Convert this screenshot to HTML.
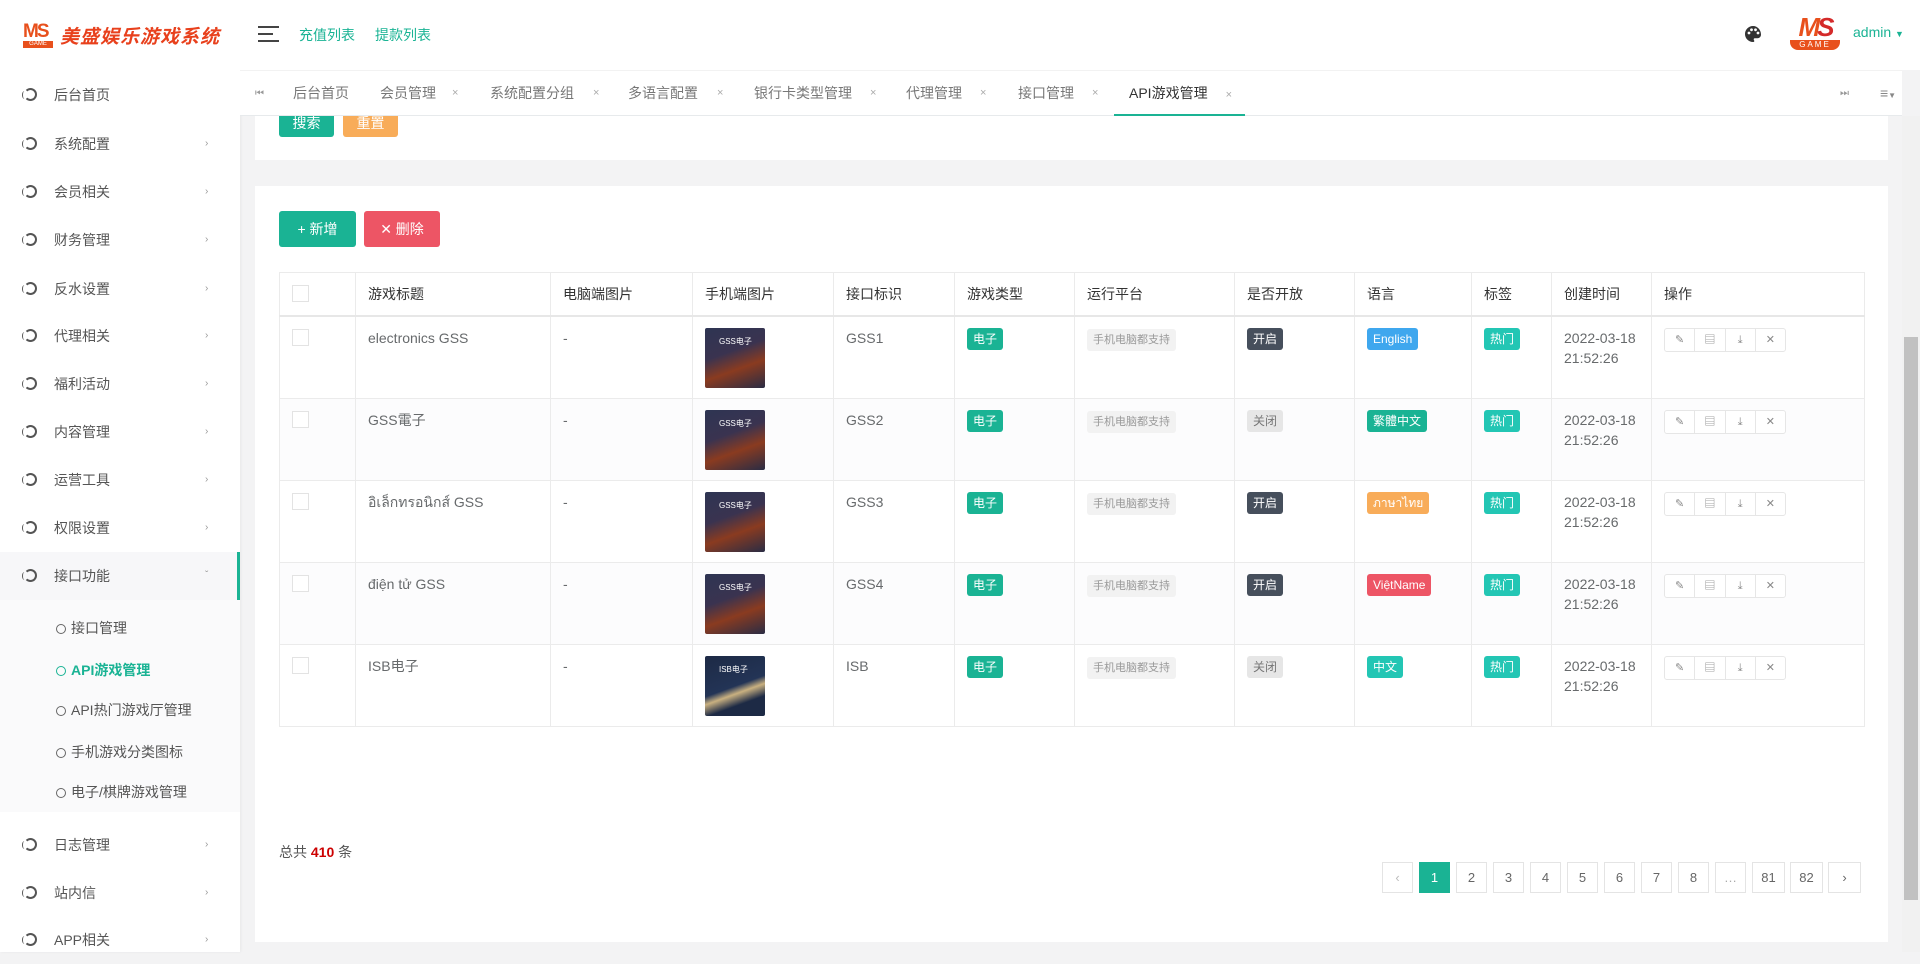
<!DOCTYPE html>
<html><head><meta charset="utf-8">
<style>
*{box-sizing:border-box;margin:0;padding:0}
body{width:1920px;height:952px;overflow:hidden;background:#f3f3f4;font-family:"Liberation Sans","Noto Sans CJK SC",sans-serif;font-size:14px;color:#676a6c;position:relative}
.abs{position:absolute}
#side{left:0;top:0;width:240px;height:952px;background:#fff;box-shadow:1px 0 3px rgba(0,0,0,.05);z-index:5}
#head{left:240px;top:0;width:1680px;height:70px;background:#fff;z-index:5}
#tabs{left:240px;top:70px;width:1662px;height:46px;background:#fff;border-bottom:1px solid #e7eaec;border-top:1px solid #f2f2f2;z-index:5}
.menu{position:absolute;left:0;width:240px;height:48px;line-height:48px;font-size:14px;color:#555}
.menu .ic{position:absolute;left:24px;top:17px;width:13px;height:13px;border:2px solid #555;border-radius:50%;border-left-color:transparent}
.menu .ic:before{content:"";position:absolute;left:-4px;top:1px;width:4px;height:8px;border-left:1.5px solid #555;border-radius:50%}
.menu span.t{position:absolute;left:54px}
.menu .ch{position:absolute;left:205px;font-size:10px;color:#999}
.sub{position:absolute;left:0;width:240px;height:41px;line-height:41px;font-size:14px;color:#555}
.sub .ic{position:absolute;left:56px;top:16px;width:10px;height:10px;border:1.5px solid #666;border-radius:50%}
.sub span.t{position:absolute;left:71px}
.tab{position:absolute;top:0;height:45px;line-height:45px;font-size:14px;color:#777}
.x{position:absolute;top:0;line-height:45px;font-size:11px;color:#aaa}
.card{position:absolute;background:#fff}
.btn{position:absolute;color:#fff;font-size:14px;text-align:center;border-radius:3px}
table{position:absolute;left:279px;top:272px;border-collapse:collapse;table-layout:fixed;width:1585px}
td,th{border:1px solid #ebebeb;vertical-align:top;text-align:left;padding:0 12px;font-weight:normal;color:#676a6c}
th{height:43px;line-height:42px;font-size:14px;color:#333;border-bottom:2px solid #e7e7e7}
td{height:82px;padding-top:11px;line-height:20px;font-size:14px}
tr:nth-child(odd) td{background:#fcfcfd}
.cb{display:inline-block;width:17px;height:17px;border:1px solid #e3e3e3;background:#fff;margin-top:1px}
.b{display:inline-block;padding:0 6px;height:22px;line-height:22px;font-size:12px;color:#fff;border-radius:3px}
.g{background:#1ab394}.dk{background:#464f5c}.gr{background:#e6e6e6;color:#777}.pl{background:#f2f2f2;color:#999;font-size:11px}
.bl{background:#3fa7ee}.or{background:#f8ac59}.rd{background:#ed5565}.tl{background:#23c6b4}
.img{width:60px;height:60px;border-radius:2px;background:linear-gradient(160deg,#2e3553 0%,#3a3350 40%,#8a3b20 65%,#2a2c44 100%);position:relative;overflow:hidden}
.img:after{content:"GSS电子";position:absolute;top:4px;left:14px;color:#fff;font-size:8px}
.img.isb{background:linear-gradient(160deg,#1d2a45 0%,#233456 50%,#c9b080 60%,#1d2a45 75%)}
.img.isb:after{content:"ISB电子"}
.ops{display:flex;width:122px;height:24px;border:1px solid #e6e6e6;border-radius:3px;background:#fff}
.ops span{flex:1;border-right:1px solid #e6e6e6;text-align:center;line-height:22px;font-size:11px;color:#888}
.ops span:last-child{border:none}
.pg{position:absolute;top:862px;height:31px;width:31px;border:1px solid #e4e4e4;background:#fff;text-align:center;line-height:29px;font-size:13px;color:#666}
</style></head><body>

<div id="side" class="abs">
  <div class="abs" style="left:23px;top:22px;width:34px;height:26px">
    <div style="color:#e8501c;font:bold 19px/19px 'Liberation Sans',sans-serif;letter-spacing:-2px">MS</div>
    <div style="background:#e8501c;color:#fff;font-size:6px;line-height:7px;text-align:center;width:30px">GAME</div>
  </div>
  <div class="abs" style="left:60px;top:22px;font-size:19px;font-weight:bold;font-style:italic;color:#e8401c;letter-spacing:1px">美盛娱乐游戏系统</div>

  <div class="menu" style="top:71px"><i class="ic"></i><span class="t">后台首页</span></div>
  <div class="menu" style="top:120px"><i class="ic"></i><span class="t">系统配置</span><span class="ch">›</span></div>
  <div class="menu" style="top:168px"><i class="ic"></i><span class="t">会员相关</span><span class="ch">›</span></div>
  <div class="menu" style="top:216px"><i class="ic"></i><span class="t">财务管理</span><span class="ch">›</span></div>
  <div class="menu" style="top:265px"><i class="ic"></i><span class="t">反水设置</span><span class="ch">›</span></div>
  <div class="menu" style="top:312px"><i class="ic"></i><span class="t">代理相关</span><span class="ch">›</span></div>
  <div class="menu" style="top:360px"><i class="ic"></i><span class="t">福利活动</span><span class="ch">›</span></div>
  <div class="menu" style="top:408px"><i class="ic"></i><span class="t">内容管理</span><span class="ch">›</span></div>
  <div class="menu" style="top:456px"><i class="ic"></i><span class="t">运营工具</span><span class="ch">›</span></div>
  <div class="menu" style="top:504px"><i class="ic"></i><span class="t">权限设置</span><span class="ch">›</span></div>
  <div class="abs" style="left:0;top:552px;width:240px;height:260px;background:#fafafb"></div>
  <div class="menu" style="top:552px;border-right:3px solid #1ab394;background:#f7f7f9"><i class="ic"></i><span class="t">接口功能</span><span class="ch">ˇ</span></div>
  <div class="sub" style="top:608px"><i class="ic"></i><span class="t">接口管理</span></div>
  <div class="sub" style="top:650px;color:#1ab394;font-weight:bold"><i class="ic" style="border-color:#1ab394"></i><span class="t">API游戏管理</span></div>
  <div class="sub" style="top:690px"><i class="ic"></i><span class="t">API热门游戏厅管理</span></div>
  <div class="sub" style="top:732px"><i class="ic"></i><span class="t">手机游戏分类图标</span></div>
  <div class="sub" style="top:772px"><i class="ic"></i><span class="t">电子/棋牌游戏管理</span></div>
  <div class="menu" style="top:821px"><i class="ic"></i><span class="t">日志管理</span><span class="ch">›</span></div>
  <div class="menu" style="top:869px"><i class="ic"></i><span class="t">站内信</span><span class="ch">›</span></div>
  <div class="menu" style="top:916px"><i class="ic"></i><span class="t">APP相关</span><span class="ch">›</span></div>
</div>

<div id="head" class="abs">
  <div class="abs" style="left:18px;top:26px;width:21px;height:16px;border-top:2px solid #444;border-bottom:2px solid #444"><div style="margin-top:5px;width:15px;border-top:2px solid #444"></div></div>
  <div class="abs" style="left:59px;top:25px;color:#1ab394;font-size:14px">充值列表</div>
  <div class="abs" style="left:135px;top:25px;color:#1ab394;font-size:14px">提款列表</div>
  <svg class="abs" style="left:1503px;top:24px" width="20" height="20" viewBox="0 0 20 20"><path d="M10 2a8 8 0 0 0 0 16c1.3 0 1.6-1 1-1.8-.6-.9-.2-2 1-2h2.5A3.5 3.5 0 0 0 18 10.5C18 5.8 14.4 2 10 2z" fill="#333"/><circle cx="6" cy="9" r="1.4" fill="#fff"/><circle cx="8.5" cy="5.8" r="1.4" fill="#fff"/><circle cx="12.5" cy="5.8" r="1.4" fill="#fff"/><circle cx="15" cy="9" r="1.4" fill="#fff"/></svg>
  <div class="abs" style="left:1550px;top:14px;width:50px;height:40px">
    <div style="color:#e8501c;font:bold italic 26px/26px 'Liberation Sans',sans-serif;letter-spacing:-3px;text-align:center"><span>M</span><span style="color:#d42a2a">S</span></div>
    <div style="background:#e8501c;color:#fff;font-size:8px;line-height:10px;text-align:center;letter-spacing:2px;border-radius:0 0 8px 8px">GAME</div>
  </div>
  <div class="abs" style="left:1613px;top:24px;color:#1ab394;font-size:14px">admin <span style="font-size:9px;color:#1ab394">▼</span></div>
</div>

<div id="tabs" class="abs">
  <div class="tab" style="left:15px;font-size:10px;color:#999">⏮</div>
  <div class="tab" style="left:53px">后台首页</div>
  <div class="tab" style="left:140px">会员管理</div><div class="x" style="left:212px">×</div>
  <div class="tab" style="left:250px">系统配置分组</div><div class="x" style="left:353px">×</div>
  <div class="tab" style="left:388px">多语言配置</div><div class="x" style="left:477px">×</div>
  <div class="tab" style="left:514px">银行卡类型管理</div><div class="x" style="left:630px">×</div>
  <div class="tab" style="left:666px">代理管理</div><div class="x" style="left:740px">×</div>
  <div class="tab" style="left:778px">接口管理</div><div class="x" style="left:852px">×</div>
  <div class="tab" style="left:874px;width:131px;border-bottom:2px solid #1ab394;color:#333;padding-left:15px">API游戏管理<span style="font-size:11px;color:#aaa;margin-left:18px">×</span></div>
  <div class="tab" style="left:1600px;font-size:10px;color:#999">⏭</div>
  <div class="tab" style="left:1640px;color:#888">≡<span style="font-size:8px">▼</span></div>
</div>

<div class="abs" style="left:1902px;top:116px;width:18px;height:836px;background:#f1f1f1"><div style="margin:221px 2px 0;height:563px;background:#c1c1c1"></div></div>

<div class="card" style="left:255px;top:116px;width:1633px;height:44px;z-index:1">
  <div class="btn" style="left:24px;top:-6px;width:55px;height:27px;line-height:27px;background:#1ab394;overflow:hidden">搜索</div>
  <div class="btn" style="left:88px;top:-6px;width:55px;height:27px;line-height:27px;background:#f8ac59">重置</div>
</div>
<div class="card" style="left:255px;top:186px;width:1633px;height:756px"></div>
<div class="btn" style="left:279px;top:211px;width:77px;height:36px;line-height:36px;background:#1ab394">+ 新增</div>
<div class="btn" style="left:364px;top:211px;width:76px;height:36px;line-height:36px;background:#ed5565">✕ 删除</div>

<table>
<colgroup><col style="width:76px"><col style="width:195px"><col style="width:142px"><col style="width:141px"><col style="width:121px"><col style="width:120px"><col style="width:160px"><col style="width:120px"><col style="width:117px"><col style="width:80px"><col style="width:100px"><col style="width:213px"></colgroup>
<tr><th><span class="cb" style="margin-top:12px;vertical-align:top"></span></th><th>游戏标题</th><th>电脑端图片</th><th>手机端图片</th><th>接口标识</th><th>游戏类型</th><th>运行平台</th><th>是否开放</th><th>语言</th><th>标签</th><th>创建时间</th><th>操作</th></tr>
<tr><td><span class="cb"></span></td><td>electronics GSS</td><td>-</td><td><div class="img"></div></td><td>GSS1</td><td><span class="b g">电子</span></td><td><span class="b pl">手机电脑都支持</span></td><td><span class="b dk">开启</span></td><td><span class="b bl">English</span></td><td><span class="b tl">热门</span></td><td>2022-03-18<br>21:52:26</td><td><div class="ops"><span>✎</span><span>▤</span><span>⤓</span><span>✕</span></div></td></tr>
<tr><td><span class="cb"></span></td><td>GSS電子</td><td>-</td><td><div class="img"></div></td><td>GSS2</td><td><span class="b g">电子</span></td><td><span class="b pl">手机电脑都支持</span></td><td><span class="b gr">关闭</span></td><td><span class="b g">繁體中文</span></td><td><span class="b tl">热门</span></td><td>2022-03-18<br>21:52:26</td><td><div class="ops"><span>✎</span><span>▤</span><span>⤓</span><span>✕</span></div></td></tr>
<tr><td><span class="cb"></span></td><td>อิเล็กทรอนิกส์ GSS</td><td>-</td><td><div class="img"></div></td><td>GSS3</td><td><span class="b g">电子</span></td><td><span class="b pl">手机电脑都支持</span></td><td><span class="b dk">开启</span></td><td><span class="b or">ภาษาไทย</span></td><td><span class="b tl">热门</span></td><td>2022-03-18<br>21:52:26</td><td><div class="ops"><span>✎</span><span>▤</span><span>⤓</span><span>✕</span></div></td></tr>
<tr><td><span class="cb"></span></td><td>điện tử GSS</td><td>-</td><td><div class="img"></div></td><td>GSS4</td><td><span class="b g">电子</span></td><td><span class="b pl">手机电脑都支持</span></td><td><span class="b dk">开启</span></td><td><span class="b rd">ViệtName</span></td><td><span class="b tl">热门</span></td><td>2022-03-18<br>21:52:26</td><td><div class="ops"><span>✎</span><span>▤</span><span>⤓</span><span>✕</span></div></td></tr>
<tr><td><span class="cb"></span></td><td>ISB电子</td><td>-</td><td><div class="img isb"></div></td><td>ISB</td><td><span class="b g">电子</span></td><td><span class="b pl">手机电脑都支持</span></td><td><span class="b gr">关闭</span></td><td><span class="b tl">中文</span></td><td><span class="b tl">热门</span></td><td>2022-03-18<br>21:52:26</td><td><div class="ops"><span>✎</span><span>▤</span><span>⤓</span><span>✕</span></div></td></tr>
</table>

<div class="abs" style="left:279px;top:842px;font-size:14px;color:#555">总共 <b style="color:#c00">410</b> 条</div>

<div class="pg" style="left:1382px;color:#bbb">‹</div>
<div class="pg" style="left:1419px;background:#1ab394;border-color:#1ab394;color:#fff">1</div>
<div class="pg" style="left:1456px">2</div>
<div class="pg" style="left:1493px">3</div>
<div class="pg" style="left:1530px">4</div>
<div class="pg" style="left:1567px">5</div>
<div class="pg" style="left:1604px">6</div>
<div class="pg" style="left:1641px">7</div>
<div class="pg" style="left:1678px">8</div>
<div class="pg" style="left:1715px;color:#aaa">…</div>
<div class="pg" style="left:1752px;width:33px">81</div>
<div class="pg" style="left:1790px;width:33px">82</div>
<div class="pg" style="left:1828px;width:33px">›</div>
</body></html>
